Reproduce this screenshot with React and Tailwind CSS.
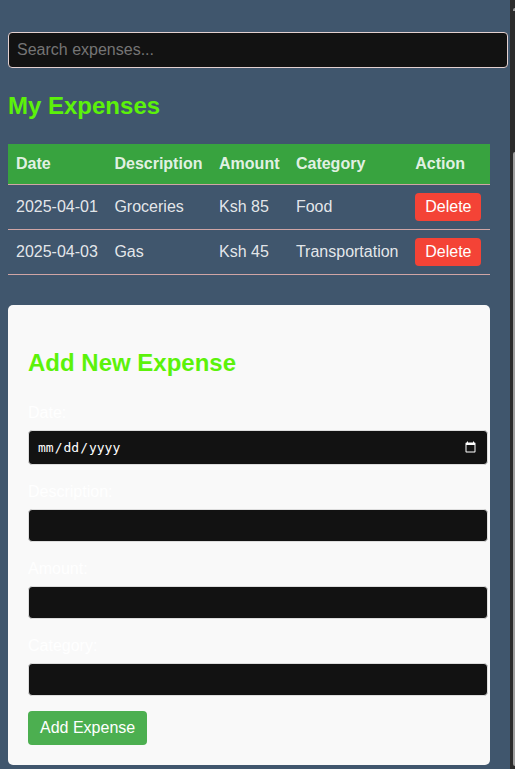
import { useState } from "react";

const initialExpenses = [
  { id: 1, date: "2025-04-01", description: "Groceries", amount: 85, category: "Food" },
  { id: 2, date: "2025-04-03", description: "Gas", amount: 45, category: "Transportation" },
];

const columns = ["Date", "Description", "Amount", "Category", "Action"];

const fields = [
  { name: "date", label: "Date:", type: "date", height: "h-[35px]" },
  { name: "description", label: "Description:", type: "text", height: "h-[33px]" },
  { name: "amount", label: "Amount:", type: "text", height: "h-[33px]" },
  { name: "category", label: "Category:", type: "text", height: "h-[33px]" },
];

function ExpenseTable({ expenses, onDelete }) {
  return (
    <table className="mb-[30px] w-full border-collapse text-left">
      <thead className="bg-[#38a33f]">
        <tr className="border-b border-[#d0a5a5]">
          {columns.map((column) => (
            <th key={column} className="p-2 font-bold">
              {column}
            </th>
          ))}
        </tr>
      </thead>
      <tbody>
        {expenses.map((expense) => (
          <tr key={expense.id} className="border-b border-[#d0a5a5]">
            <td className="p-2">{expense.date}</td>
            <td className="p-2">{expense.description}</td>
            <td className="p-2">Ksh {expense.amount}</td>
            <td className="p-2">{expense.category}</td>
            <td className="p-2">
              <button
                type="button"
                onClick={() => onDelete(expense.id)}
                className="block rounded bg-[#f44336] px-2.5 py-[5px] leading-[18px] text-white"
              >
                Delete
              </button>
            </td>
          </tr>
        ))}
      </tbody>
    </table>
  );
}

function ExpenseForm() {
  return (
    <form
      className="rounded-[5px] bg-[#f9f9f9] p-5"
      onSubmit={(event) => event.preventDefault()}
    >
      <h2 className="my-5 text-2xl leading-9 font-bold text-[#5cf20a]">Add New Expense</h2>
      {fields.map((field) => (
        <div key={field.name} className="mb-[15px]">
          <label htmlFor={field.name} className="mb-[5px] block text-white">
            {field.label}
          </label>
          <input
            id={field.name}
            name={field.name}
            type={field.type}
            className={`${field.height} block w-[calc(100%+18px)] rounded border border-[#dddddd] bg-[#121212] px-2 font-[monospace] text-[13px] text-white scheme-dark`}
          />
        </div>
      ))}
      <button
        type="submit"
        className="block rounded bg-[#4caf50] px-3 py-2 leading-[18px] text-white"
      >
        Add Expense
      </button>
    </form>
  );
}

export default function App() {
  const [expenses, setExpenses] = useState(initialExpenses);
  const [query, setQuery] = useState("");
  const visible = expenses.filter((expense) =>
    expense.description.toLowerCase().includes(query.toLowerCase())
  );

  return (
    <div className="flex min-h-screen bg-[#40566d] font-['Liberation_Sans',Arial,sans-serif] text-base text-white/87">
      <main className="min-w-0 flex-1 pt-8 pr-5 pb-1 pl-2">
        <input
          type="text"
          aria-label="Search expenses"
          placeholder="Search expenses..."
          value={query}
          onChange={(event) => setQuery(event.target.value)}
          className="block h-9 w-[calc(100%+18px)] rounded border border-[#e3d0d0] bg-[#121212] px-2 text-white placeholder:text-[#757575]"
        />
        <h2 className="my-5 text-2xl leading-9 font-bold text-[#5cf20a]">My Expenses</h2>
        <ExpenseTable
          expenses={visible}
          onDelete={(id) => setExpenses(expenses.filter((expense) => expense.id !== id))}
        />
        <ExpenseForm />
      </main>
      <div className="flex w-[5px] shrink-0 flex-col bg-[#2c2c2c] pt-2 pb-[3px] pl-[3px]" aria-hidden="true">
        <div className="h-[3px] w-0.5 rounded-tl bg-[#9f9f9f]" />
        <div className="mt-[141px] flex-1 rounded-l-sm bg-[#9f9f9f]" />
      </div>
    </div>
  );
}
